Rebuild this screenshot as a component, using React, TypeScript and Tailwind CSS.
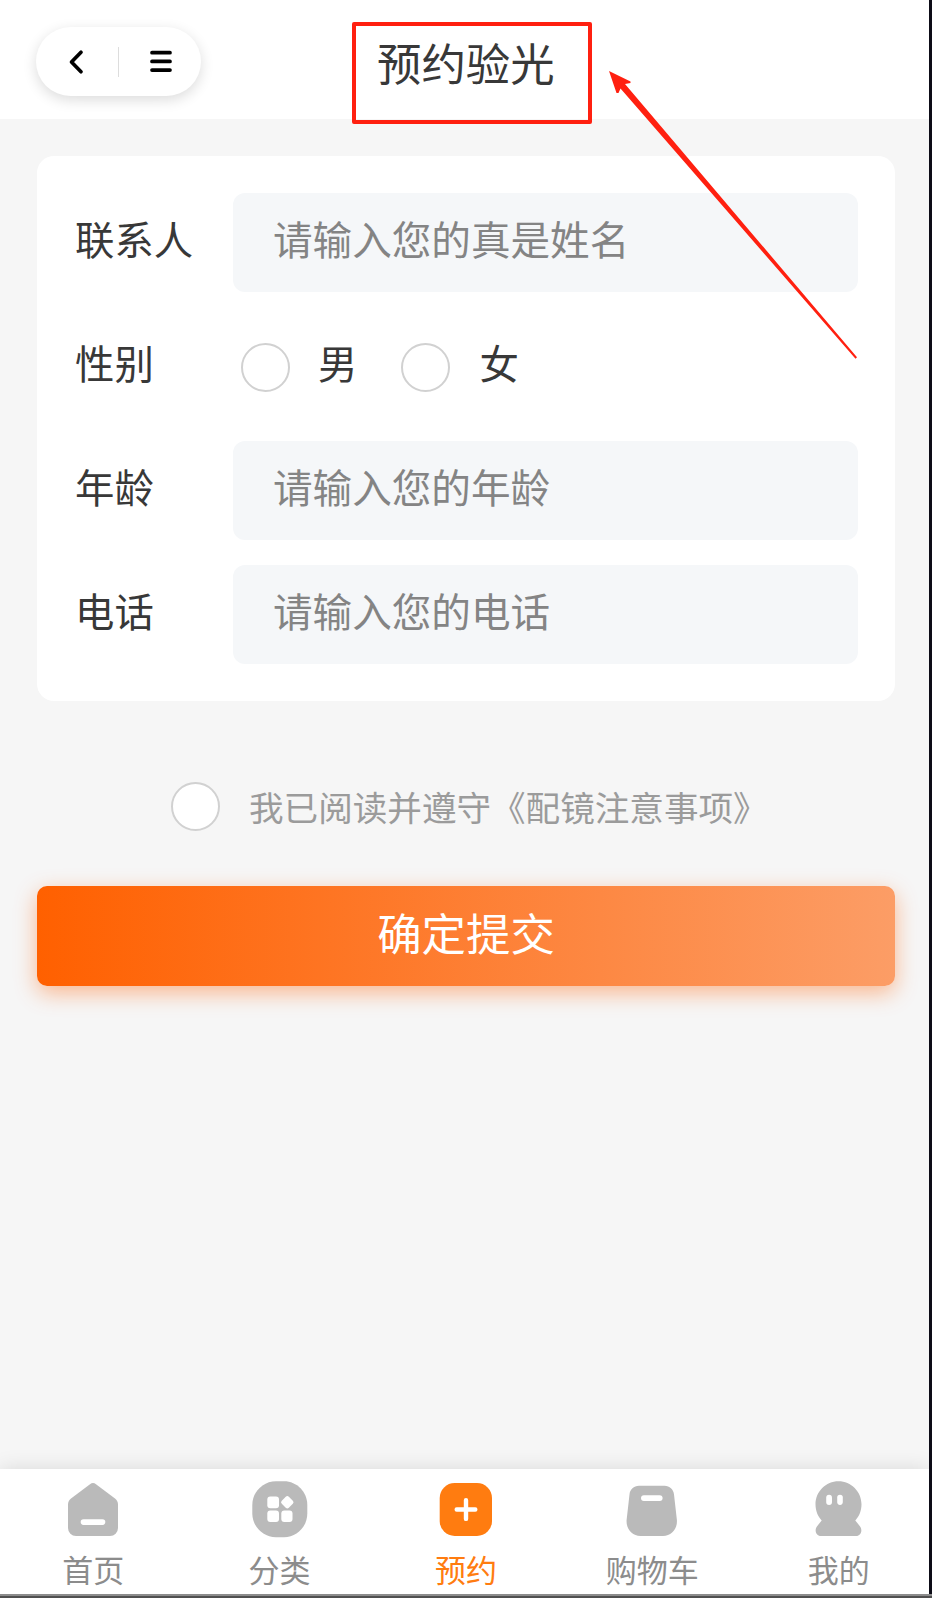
import React, { useState } from 'react';

type TabKey = 'home' | 'category' | 'booking' | 'cart' | 'mine';

const HomeIcon = () => (
  <svg width="56" height="56" viewBox="0 0 56 56" fill="currentColor">
    <path d="M25 2.200a4.800 4.800 0 0 1 6 0L50 16.600a7.500 7.500 0 0 1 3 6V46a8 8 0 0 1-8 8H11a8 8 0 0 1-8-8V22.600a7.500 7.500 0 0 1 3-6z" />
    <rect x="15.700" y="37.300" width="24.600" height="5.600" rx="2.800" fill="#fff" />
  </svg>
);

const CategoryIcon = () => (
  <svg width="56" height="56" viewBox="0 0 56 56" fill="currentColor" overflow="visible">
    <path d="M24 -.7h8C45 -.7 55.300 10 55.300 23v8.500c0 13-10.300 23.700-23.300 23.700h-8C11 55.200.3 44.500.3 31.500V23C.3 10 11-.7 24-.7z" />
    <g fill="#fff">
      <rect x="15.300" y="14.500" width="11.700" height="11.700" rx="3" />
      <rect x="15.300" y="28.500" width="11.700" height="11.500" rx="3" />
      <rect x="29.300" y="28.500" width="11.200" height="11.500" rx="3" />
      <rect x="30.300" y="15.300" width="10" height="10" rx="2.200" transform="rotate(45 35.300 20.300)" />
    </g>
  </svg>
);

const BookingIcon = () => (
  <svg width="56" height="56" viewBox="0 0 56 56" fill="currentColor">
    <rect x="1.700" y="1" width="52.300" height="53" rx="15" />
    <path d="M28 18.300v18.600M18.700 27.500h18.600" stroke="#fff" strokeWidth="4.400" strokeLinecap="round" />
  </svg>
);

const CartIcon = () => (
  <svg width="56" height="56" viewBox="0 0 56 56" fill="currentColor">
    <path d="M15 3.800h25.500c5.200 0 9 3.600 9.500 8.700L52.900 38C53.500 47 47.500 54 39 54h-22.500C8 54 2 47 2.600 38l2.900-25.500C6 7.400 9.800 3.800 15 3.800z" />
    <rect x="17" y="13.200" width="21.600" height="5.800" rx="2.900" fill="#fff" />
  </svg>
);

const MineIcon = () => (
  <svg width="56" height="56" viewBox="0 0 56 56" fill="currentColor" overflow="visible">
    <path d="M27.500-.8C40.100-.8 50.500 9.600 50.500 22.200c0 6.300-2.200 12-6.200 16.300l4.600 5.700c3 4 1.200 9.800-3.900 9.800h-35c-5.100 0-6.900-5.800-3.900-9.800l4.600-5.700C6.700 34.200 4.500 28.500 4.500 22.200 4.500 9.600 14.900-.8 27.500-.8z" />
    <rect x="15.200" y="12.700" width="5.800" height="10.200" rx="2.900" fill="#fff" />
    <rect x="26.200" y="12.700" width="5.600" height="10.200" rx="2.800" fill="#fff" />
  </svg>
);

const tabs: { key: TabKey; label: string; icon: React.ReactNode }[] = [
  { key: 'home', label: '首页', icon: <HomeIcon /> },
  { key: 'category', label: '分类', icon: <CategoryIcon /> },
  { key: 'booking', label: '预约', icon: <BookingIcon /> },
  { key: 'cart', label: '购物车', icon: <CartIcon /> },
  { key: 'mine', label: '我的', icon: <MineIcon /> },
];

interface RadioProps {
  checked: boolean;
  onClick: () => void;
}

const Radio: React.FC<RadioProps> = ({ checked, onClick }) => (
  <button
    type="button"
    role="radio"
    aria-checked={checked}
    onClick={onClick}
    className={`w-[49px] h-[49px] shrink-0 rounded-full border-2 ${
      checked ? 'border-[#ff7c10] bg-[#ff7c10]' : 'border-[#d1d1d1] bg-white'
    }`}
  />
);

interface FieldProps {
  label: string;
  placeholder: string;
  value: string;
  onChange: (value: string) => void;
}

const Field: React.FC<FieldProps> = ({ label, placeholder, value, onChange }) => (
  <div className="flex h-[99px] items-center">
    <label className="w-[159px] pb-[9px] pl-px text-[39.4px] leading-[56px]">{label}</label>
    <input
      value={value}
      onChange={(e) => onChange(e.target.value)}
      placeholder={placeholder}
      className="h-[99px] min-w-0 flex-1 rounded-xl bg-[#f5f7f9] px-10 pb-[10px] text-[39.6px] outline-none placeholder:text-[#848484]"
    />
  </div>
);

const App: React.FC = () => {
  const [name, setName] = useState('');
  const [gender, setGender] = useState<'male' | 'female' | null>(null);
  const [age, setAge] = useState('');
  const [phone, setPhone] = useState('');
  const [agreed, setAgreed] = useState(false);
  const [activeTab, setActiveTab] = useState<TabKey>('booking');

  return (
    <div className="relative flex h-[1598px] w-[932px] flex-col overflow-hidden bg-[#0d0c17] font-['Noto_Sans_CJK_SC',sans-serif] text-[#383838]">
      <div className="flex w-[929px] flex-1 flex-col overflow-hidden bg-[#f6f6f6]">
        {/* Header */}
        <header className="flex h-[119px] items-start bg-white pl-9 pt-[27px]">
          <div className="flex h-[69px] w-[165px] items-center rounded-full bg-white text-black shadow-[0_4px_14px_rgba(0,0,0,0.14)]">
            <button type="button" aria-label="返回" className="flex flex-1 justify-center">
              <svg width="24" height="28" viewBox="0 0 24 28" fill="none" stroke="currentColor" strokeWidth="3.700" strokeLinecap="round" strokeLinejoin="round">
                <path d="M16 4.300 6.500 14l9.500 9.700" />
              </svg>
            </button>
            <span className="h-[30px] w-px bg-[#ddd]" />
            <button type="button" aria-label="菜单" className="flex flex-1 justify-center">
              <svg width="28" height="28" viewBox="0 0 28 28" stroke="currentColor" strokeWidth="3.700" strokeLinecap="round">
                <path d="M6 4.700h18M6 13.400h18M6 22.100h18" />
              </svg>
            </button>
          </div>
          <h1 className="ml-[176px] mt-[3px] text-[44.4px] leading-[64px]">预约验光</h1>
        </header>

        <main className="flex flex-1 flex-col pl-[37px] pr-[34px] pt-[37px]">
          {/* Form card */}
          <div className="flex h-[545px] flex-col gap-[25px] rounded-[17px] bg-white px-[37px] pt-[37px]">
            <Field label="联系人" placeholder="请输入您的真是姓名" value={name} onChange={setName} />
            <div className="flex h-[99px] items-center pt-[2px] text-[39.4px] leading-[56px]">
              <span className="w-[167px] pb-[11px] pl-px">性别</span>
              <Radio checked={gender === 'male'} onClick={() => setGender('male')} />
              <span className="ml-[28px] mr-[44px] pb-[11px]">男</span>
              <Radio checked={gender === 'female'} onClick={() => setGender('female')} />
              <span className="ml-[29px] pb-[11px]">女</span>
            </div>
            <Field label="年龄" placeholder="请输入您的年龄" value={age} onChange={setAge} />
            <Field label="电话" placeholder="请输入您的电话" value={phone} onChange={setPhone} />
          </div>

          {/* Agreement */}
          <div className="mt-[80px] flex h-[50px] items-center pl-[134px]">
            <Radio checked={agreed} onClick={() => setAgreed(!agreed)} />
            <span className="ml-[29px] whitespace-nowrap text-[34.6px] leading-[50px] text-[#9b9b9b]">
              我已阅读并遵守《配镜注意事项》
            </span>
          </div>

          <button
            type="button"
            className="mt-[55px] h-[100px] w-full rounded-[10px] bg-[linear-gradient(90deg,#ff6000,#fc9d66)] pb-[7px] text-[44.4px] text-white shadow-[0_7px_22px_rgba(255,96,0,0.42)]"
          >
            确定提交
          </button>
        </main>

        {/* Tab bar */}
        <nav className="flex h-[125px] bg-white pt-[13px] shadow-[0_0_20px_rgba(0,0,0,0.12)]">
          {tabs.map((tab) => (
            <button
              key={tab.key}
              type="button"
              onClick={() => setActiveTab(tab.key)}
              className={`flex w-[186.4px] shrink-0 flex-col items-center ${activeTab === tab.key ? 'text-[#ff7c10]' : 'text-[#bababa]'}`}
            >
              {tab.icon}
              <span className={`mt-[9px] text-[31px] leading-[44px] ${activeTab === tab.key ? '' : 'text-[#8c8c8c]'}`}>
                {tab.label}
              </span>
            </button>
          ))}
        </nav>
      </div>
      <div className="h-1 border-t-2 border-[#8c8c8c] bg-[#505050]" />

      {/* Annotation over the title */}
      <div className="pointer-events-none absolute left-[352px] top-[22px] h-[102px] w-[240px] rounded-[2px] border-4 border-[#ff2010]" />
      <svg className="pointer-events-none absolute left-[600px] top-[60px]" width="270" height="310" viewBox="600 60 270 310" fill="#ff2010">
        <path d="M609 71 630.500 81.500V83L625 84 857 357.200 855.500 358.700 620.500 88.500 618.500 93 616.500 93z" />
      </svg>
    </div>
  );
};

export default App;
